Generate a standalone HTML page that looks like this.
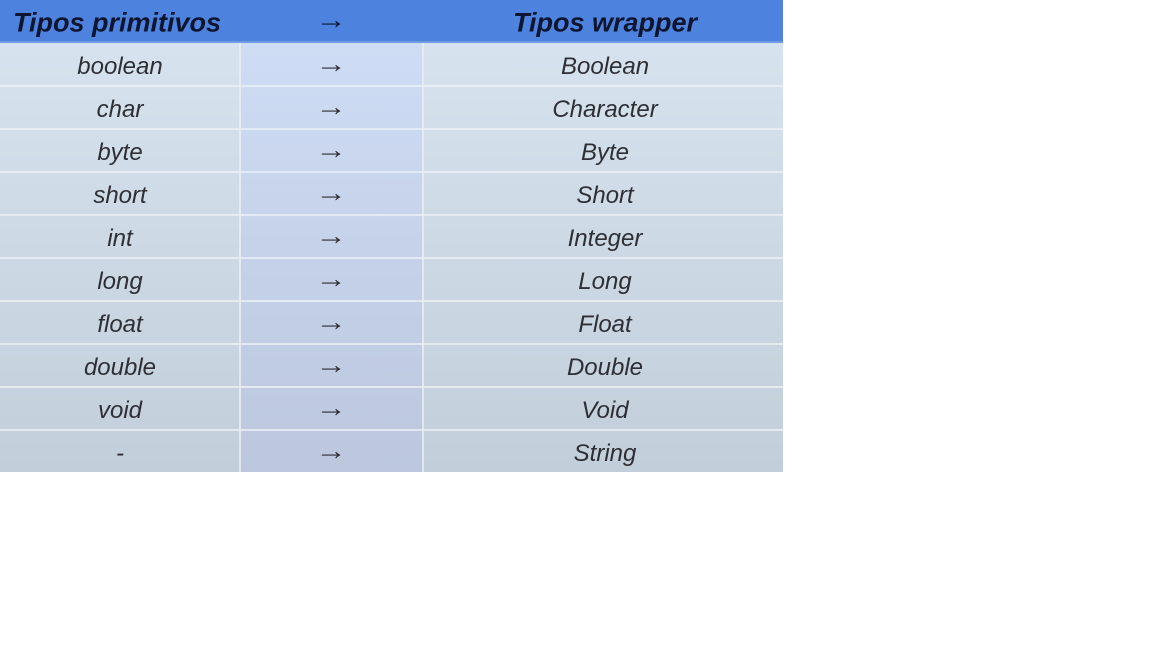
<!DOCTYPE html>
<html><head><style>
body{margin:0;width:1152px;height:648px;background:#fff;overflow:hidden;font-family:"Liberation Sans",sans-serif}
.t{position:absolute;left:0;top:0;width:783px;height:472px;background:linear-gradient(#d8e5f0,#c2ced9)}
.h{position:absolute;left:0;top:0;width:783px;height:41px;background:#4d83de;border-bottom:2px solid #6f9be4}
.c2{position:absolute;left:241px;top:43px;width:182px;height:429px;background:linear-gradient(#cedcf5,#bcc7dd)}
.r{position:absolute;left:0;width:783px;height:43px;font-style:italic;font-size:24px;color:#2e2e35}
.r span{position:absolute;top:calc(50% + 2px);transform:translate(-50%,-50%);white-space:nowrap}
.r span.a{font-style:normal;font-size:26px;top:calc(50% - 1px);transform:translate(-50%,-50%) scaleX(1.2)}
.l{position:absolute;left:0;width:783px;height:2px;background:#eaf0f5;opacity:.8}
.v{position:absolute;top:43px;width:2px;height:429px;background:#e8eef3;opacity:.8}
.hd{font-weight:bold;color:#0d1530;font-size:27px}
</style></head><body>
<div class="t"></div><div class="h"></div><div class="c2"></div>
<div class="v" style="left:239px"></div><div class="v" style="left:422px"></div>
<div class="r hd" style="top:0;height:41px"><span style="left:117px">Tipos primitivos</span><span class="a" style="left:331px;font-weight:normal">→</span><span style="left:605px">Tipos wrapper</span></div>
<div class="l" style="top:85px"></div><div class="l" style="top:128px"></div><div class="l" style="top:171px"></div><div class="l" style="top:214px"></div><div class="l" style="top:257px"></div><div class="l" style="top:300px"></div><div class="l" style="top:343px"></div><div class="l" style="top:386px"></div><div class="l" style="top:429px"></div>
<div class="r" style="top:43px"><span style="left:120px">boolean</span><span class="a" style="left:331px">→</span><span style="left:605px">Boolean</span></div>
<div class="r" style="top:86px"><span style="left:120px">char</span><span class="a" style="left:331px">→</span><span style="left:605px">Character</span></div>
<div class="r" style="top:129px"><span style="left:120px">byte</span><span class="a" style="left:331px">→</span><span style="left:605px">Byte</span></div>
<div class="r" style="top:172px"><span style="left:120px">short</span><span class="a" style="left:331px">→</span><span style="left:605px">Short</span></div>
<div class="r" style="top:215px"><span style="left:120px">int</span><span class="a" style="left:331px">→</span><span style="left:605px">Integer</span></div>
<div class="r" style="top:258px"><span style="left:120px">long</span><span class="a" style="left:331px">→</span><span style="left:605px">Long</span></div>
<div class="r" style="top:301px"><span style="left:120px">float</span><span class="a" style="left:331px">→</span><span style="left:605px">Float</span></div>
<div class="r" style="top:344px"><span style="left:120px">double</span><span class="a" style="left:331px">→</span><span style="left:605px">Double</span></div>
<div class="r" style="top:387px"><span style="left:120px">void</span><span class="a" style="left:331px">→</span><span style="left:605px">Void</span></div>
<div class="r" style="top:430px"><span style="left:120px">-</span><span class="a" style="left:331px">→</span><span style="left:605px">String</span></div>
</body></html>
